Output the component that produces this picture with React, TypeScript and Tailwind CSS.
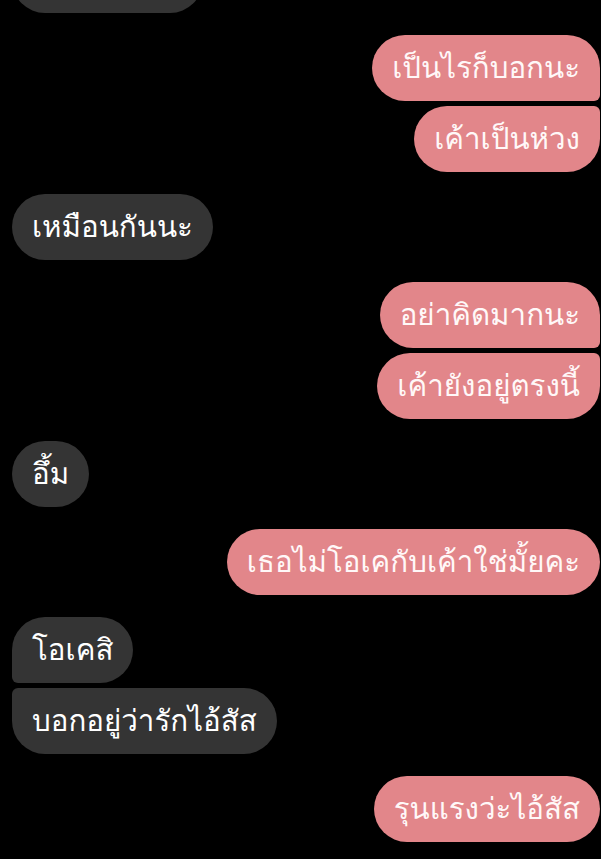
import React from 'react';

type Msg = {
  text: string;
  me: boolean;
  shape: string;
  grouped: boolean;
};

// rounded-[33px] is the full pill; grouped bubbles flatten the inner corner
const messages: Msg[] = [
  { text: 'เป็นไรก็บอกนะ', me: true, shape: 'rounded-l-[33px] rounded-tr-[33px] rounded-br-[6px]', grouped: false },
  { text: 'เค้าเป็นห่วง', me: true, shape: 'rounded-l-[33px] rounded-tr-[6px] rounded-br-[33px]', grouped: true },
  { text: 'เหมือนกันนะ', me: false, shape: 'rounded-[33px]', grouped: false },
  { text: 'อย่าคิดมากนะ', me: true, shape: 'rounded-l-[33px] rounded-tr-[33px] rounded-br-[6px]', grouped: false },
  { text: 'เค้ายังอยู่ตรงนี้', me: true, shape: 'rounded-l-[33px] rounded-tr-[6px] rounded-br-[33px]', grouped: true },
  { text: 'อึ้ม', me: false, shape: 'rounded-[33px]', grouped: false },
  { text: 'เธอไม่โอเคกับเค้าใช่มั้ยคะ', me: true, shape: 'rounded-[33px]', grouped: false },
  { text: 'โอเคสิ', me: false, shape: 'rounded-r-[33px] rounded-tl-[33px] rounded-bl-[6px]', grouped: false },
  { text: 'บอกอยู่ว่ารักไอ้สัส', me: false, shape: 'rounded-r-[33px] rounded-tl-[6px] rounded-bl-[33px]', grouped: true },
  { text: 'รุนแรงว่ะไอ้สัส', me: true, shape: 'rounded-[33px]', grouped: false },
];

const Bubble = ({ msg }: { msg: Msg }) => {
  return (
    <div className={`flex ${msg.me ? 'justify-end' : 'justify-start'} ${msg.grouped ? 'mt-[5px]' : 'mt-[22px]'}`}>
      <div
        className={`${msg.shape} ${
          msg.me ? 'bg-[#e2868a] text-[#fff8f8]' : 'bg-[#343434] text-white'
        } h-[66px] px-[20px] flex items-center text-[29.5px] leading-none whitespace-nowrap`}
      >
        {msg.text}
      </div>
    </div>
  );
};

const App = () => {
  return (
    <main
      className="w-[601px] h-[859px] bg-black overflow-hidden"
      style={{ fontFamily: 'Loma, "Noto Sans Thai", "Noto Sans", sans-serif' }}
    >
      <div className="flex flex-col pl-[12px] pr-[1px]">
        {/* last bubble of the earlier message, scrolled mostly out of view */}
        <div className="-mt-[53px] w-[191px] h-[66px] rounded-[33px] bg-[#343434]" />
        {messages.map((m, i) => (
          <Bubble key={i} msg={m} />
        ))}
      </div>
    </main>
  );
};

export default App;
